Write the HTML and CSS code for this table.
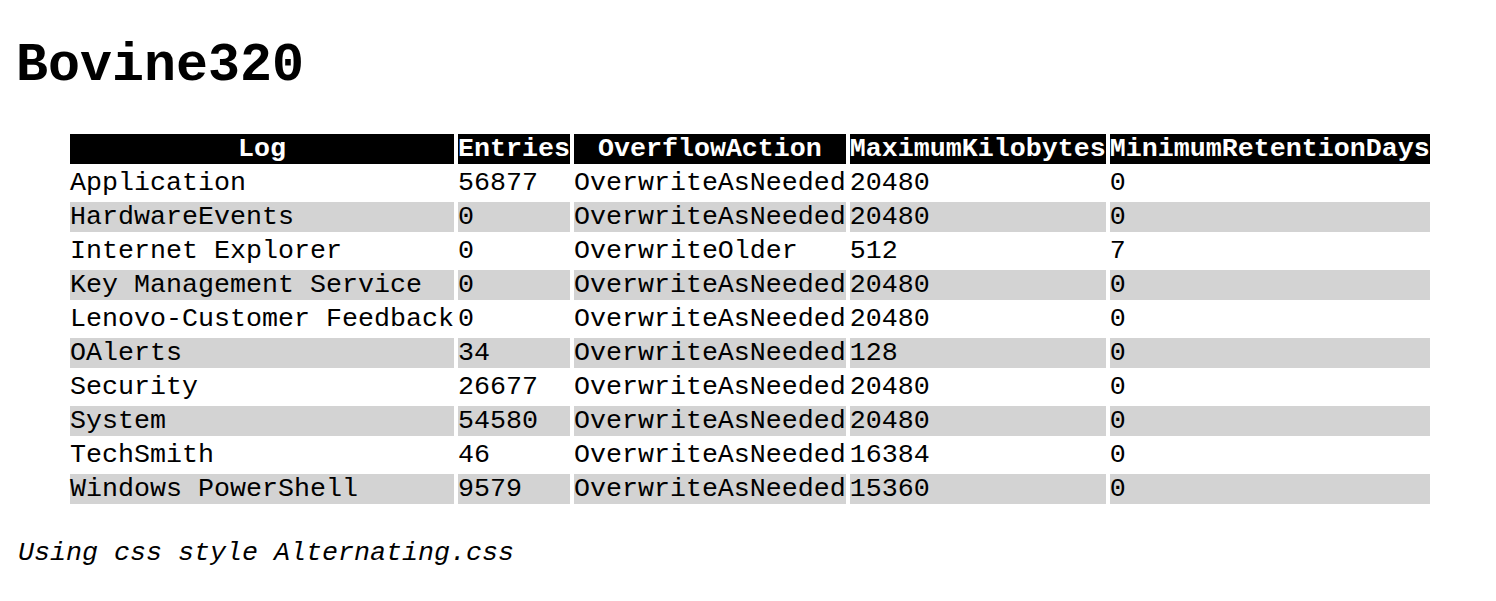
FILE: index.html
```html
<!DOCTYPE html>
<html>
<head>
<meta charset="utf-8">
<title>Bovine320</title>
<link rel="stylesheet" href="styles.css">
</head>
<body>
<h1 class="title">Bovine320</h1>
<table class="logs">
<thead>
<tr><th>Log</th><th>Entries</th><th>OverflowAction</th><th>MaximumKilobytes</th><th>MinimumRetentionDays</th></tr>
</thead>
<tbody>
<tr><td>Application</td><td>56877</td><td>OverwriteAsNeeded</td><td>20480</td><td>0</td></tr>
<tr><td>HardwareEvents</td><td>0</td><td>OverwriteAsNeeded</td><td>20480</td><td>0</td></tr>
<tr><td>Internet Explorer</td><td>0</td><td>OverwriteOlder</td><td>512</td><td>7</td></tr>
<tr><td>Key Management Service</td><td>0</td><td>OverwriteAsNeeded</td><td>20480</td><td>0</td></tr>
<tr><td>Lenovo-Customer Feedback</td><td>0</td><td>OverwriteAsNeeded</td><td>20480</td><td>0</td></tr>
<tr><td>OAlerts</td><td>34</td><td>OverwriteAsNeeded</td><td>128</td><td>0</td></tr>
<tr><td>Security</td><td>26677</td><td>OverwriteAsNeeded</td><td>20480</td><td>0</td></tr>
<tr><td>System</td><td>54580</td><td>OverwriteAsNeeded</td><td>20480</td><td>0</td></tr>
<tr><td>TechSmith</td><td>46</td><td>OverwriteAsNeeded</td><td>16384</td><td>0</td></tr>
<tr><td>Windows PowerShell</td><td>9579</td><td>OverwriteAsNeeded</td><td>15360</td><td>0</td></tr>
</tbody>
</table>
<p class="note">Using css style Alternating.css</p>
</body>
</html>
```
FILE: styles.css
```css
html, body {
  background: #ffffff;
}
body {
  margin: 8px;
  font-family: "Liberation Mono", "Courier New", monospace;
  font-size: 26.667px;
  color: #000000;
}
.title {
  font-size: 53.333px;
  font-weight: bold;
  margin: 28px 0 34px 8px;
}
.logs {
  border-collapse: separate;
  border-spacing: 4px;
  margin-left: 58px;
  font-size: 26.667px;
}
.logs th,
.logs td {
  padding: 0;
  white-space: pre;
}
.logs th {
  background: #000000;
  color: #ffffff;
  font-weight: bold;
  text-align: center;
}
.logs td {
  text-align: left;
}
.logs tbody tr:nth-child(even) td {
  background: #d3d3d3;
}
.note {
  font-style: italic;
  margin: 30px 0 0 10px;
}
```
